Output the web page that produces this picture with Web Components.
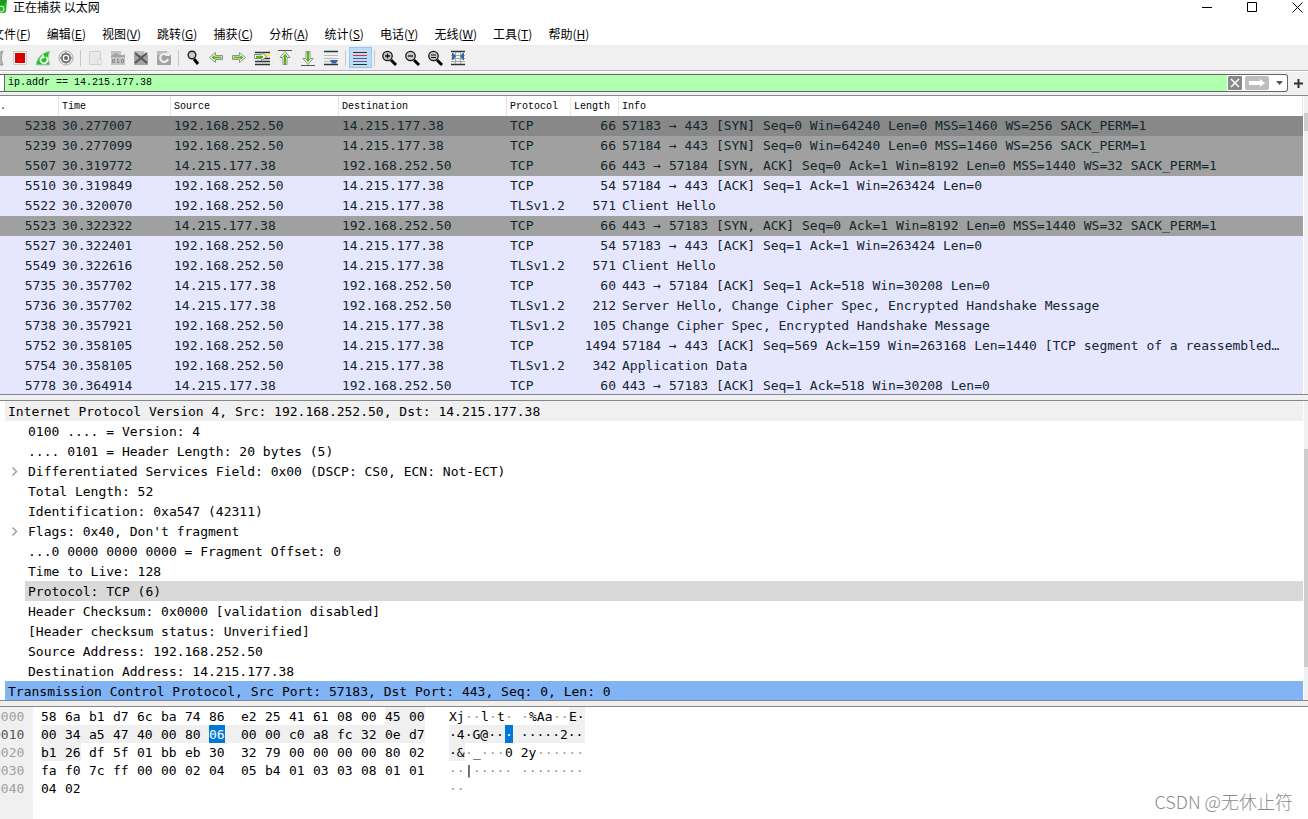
<!DOCTYPE html>
<html lang="zh-CN">
<head>
<meta charset="utf-8">
<title>正在捕获 以太网</title>
<style>
html, body { margin: 0; height: 100%; }
body {
  --mono: "DejaVu Sans Mono", "Liberation Mono", monospace;
  --small-mono: "Liberation Mono", "DejaVu Sans Mono", monospace;
  --ui: "Noto Sans CJK SC", "Noto Sans", sans-serif;
  --face: #f0f0f0;
  --edge: #828790;
  font: 12px/16px var(--ui);
  color: #000;
  background: #fff;
  overflow: hidden;
}
</style>
</head>
<body>
<ws-window></ws-window>

<script>
function define(name, html, setup) {
  const template = document.createElement('template');
  template.innerHTML = '<style>*{box-sizing:border-box}button{font:inherit;color:inherit;background:none;border:0;padding:0;margin:0}:host{display:block;box-sizing:border-box}</style>' + html;
  customElements.define(name, class extends HTMLElement {
    constructor() {
      super();
      this.attachShadow({ mode: 'open' }).append(template.content.cloneNode(true));
    }
    connectedCallback() {
      if (setup && !this.ready) { this.ready = true; setup(this, this.shadowRoot); }
    }
  });
}

/* Title bar */
define('ws-titlebar', `
<style>
:host { display: flex; height: 15px; }
.logo { width: 7px; height: 13px; }
h1 { flex: 1; margin: 0 0 0 6px; font-size: 12px; font-weight: 400; line-height: 14px; }
.controls { display: flex; margin-right: -12px; }
.controls button { width: 45px; height: 13px; }
.controls svg { display: block; margin: 1px auto 0; }
</style>
<svg class="logo" viewBox="0 0 7 13" aria-hidden="true"><path d="M0 0h7l-1 12q-3 2-6 1z" fill="#2eb52e"/><path d="M0 0h7l-3 5-4 1z" fill="#159a1c"/><circle cx="1" cy="9" r="3" fill="none" stroke="#d8f5d4"/></svg>
<h1>正在捕获 以太网</h1>
<div class="controls">
<button aria-label="最小化"><svg width="11" height="11" stroke="#000" fill="none"><path d="M0 5.500H10"/></svg></button>
<button aria-label="最大化"><svg width="11" height="11" stroke="#000" fill="none"><path d="M.5.500h9v9h-9z"/></svg></button>
<button aria-label="关闭"><svg width="11" height="11" stroke="#000" fill="none"><path d="M.5.500l10 10M10.500.500l-10 10"/></svg></button>
</div>`);

/* Menu bar */
define('ws-menubar', `
<style>
nav { display: flex; gap: 16px; height: 31px; margin-left: -8px; padding-top: 11px; border-bottom: 1px solid #ececec; white-space: nowrap; }
button { height: 16px; line-height: 16px; }
u { text-underline-offset: 1px; }
</style><nav></nav>`, (el, root) => {
  const items = [['文件','F'],['编辑','E'],['视图','V'],['跳转','G'],['捕获','C'],['分析','A'],['统计','S'],['电话','Y'],['无线','W'],['工具','T'],['帮助','H']];
  root.querySelector('nav').innerHTML = items.map(([t, k]) => `<button>${t}(<u>${k}</u>)</button>`).join('');
});

/* Tool button: the picture is passed in through the slot */
define('ws-tool', `
<style>
:host { width: 23px; height: 21px; flex: none; }
button { display: block; width: 23px; height: 21px; }
:host([active]) button { background: #c0dcf3; border: 1px solid #90c8f6; }
:host([active]) ::slotted(svg) { margin: -1px; }
::slotted(svg) { display: block; }
</style><button><slot></slot></button>`, (el, root) => {
  root.querySelector('button').setAttribute('aria-label', el.getAttribute('label'));
});

const arrowLeft = '<path d="M4.500 10.500l6-5v3h7v4h-7v3z" fill="#fff" stroke="#8a8f8a"/><path d="M6.500 10.500l3-2.500v1.500h7v2h-7V13z" fill="#55b50c"/>';
const paper = '<path d="M4 4h10l4 4v10H4z" fill="#a2a2a0"/><path d="M4 4h10l4 4H4z" fill="#bcbcba"/><path d="M14 4v4h4z" fill="#eee"/>';
const lens = '<path d="M13 13l5 5" stroke="#000" stroke-width="3"/><circle cx="9.500" cy="9" r="4.700" fill="#c9c9c9" stroke="#111" stroke-width="1.300"/>';
const fin = (c, d) => `<path d="M4 18c1-7 5-12 14-14-2 4-2 9 0 14z" fill="${c}" stroke="#c8c8c8"/><path d="M9 11a3.500 3.500 0 1 0 5-1" fill="none" stroke="#fff" stroke-width="1.800"/><path d="M11 7l-3 5 5-1z" fill="${d}"/>`;
const icons = [
  ['开始捕获', '<path d="M6 18c1-7 5-12 11-14-2 4-2 9 0 14z" fill="#b5b5b5" stroke="#999"/>'],
  ['停止捕获', '<path d="M4.500 4.500h13v13h-13z" fill="#eef3f3" stroke="#c8cccc"/><path d="M6 6h10v10H6z" fill="#dc0000"/>'],
  ['重新开始', fin('#21c522', '#fff')],
  ['捕获选项', '<circle cx="11" cy="11" r="7" fill="#eee" stroke="#aaa"/><circle cx="11" cy="11" r="4.200" fill="#fff" stroke="#777" stroke-width="2"/><circle cx="11" cy="11" r="2" fill="#666"/><path d="M11 5v2M11 15v2M5 11h2M15 11h2M7 7l1 1M14 14l1 1M15 7l-1 1M8 14l-1 1" stroke="#777"/>'],
  0,
  ['打开', '<path d="M5.500 4.500h11v13h-11z" fill="#e9e9e9" stroke="#cfcfcf"/><path d="M14 12h3v6h-3z" fill="#f5f5f5" stroke="#ccc"/>'],
  ['保存', '<path d="M4 4h10l4 4v10H4z" fill="#c4c4c2"/><path d="M4 9l5-3 3 2 6-1v3H4z" fill="#a2a2a0"/><path d="M14 4v4h4z" fill="#f4f4f4"/><path d="M5.500 12.500h2v3h-2zM14.500 12.500h2v3h-2zM11 12v4M10 12.500h1M10 15.500h2.500" fill="none" stroke="#888"/>'],
  ['关闭文件', paper + '<path d="M5 6l12 10M17 6L5 16" stroke="#555" stroke-width="2"/>'],
  ['重新加载', paper + '<path d="M14 8a4 4 0 1 0 1 4" fill="none" stroke="#eee" stroke-width="2.200"/><path d="M12 9h5V5z" fill="#eee"/>'],
  0,
  ['查找', '<path d="M12 12l4 5" stroke="#000" stroke-width="3"/><circle cx="10" cy="8" r="3.800" fill="#c9c9c9" stroke="#222" stroke-width="1.400"/>'],
  ['后退', arrowLeft],
  ['前进', '<g transform="matrix(-1 0 0 1 22 0)">' + arrowLeft + '</g>'],
  ['转到分组', '<path d="M4 5.500h15M4 14.500h15M12 11.500h7M4 17.500h15" stroke="#2e3436" stroke-width="1.500"/><path d="M14 6.500h5v3h-5z" fill="#fce94f"/><path d="M3.500 7.500h7v-2l5 4-5 4v-2h-7z" fill="#fff" stroke="#8a8f8a"/><path d="M5 8.700h7V11H5z" fill="#55b50c"/>'],
  ['第一个', '<path d="M4 3.500h14" stroke="#555"/><path d="M11 4.500l5 6h-3v7H9v-7H6z" fill="#fff" stroke="#8a8f8a"/><path d="M11 6.500l2.500 3.500H12v7h-2v-7H8.500z" fill="#55b50c"/>'],
  ['最后一个', '<path d="M4 18.500h14" stroke="#555"/><path d="M11 17.500l5-6h-3v-7H9v7H6z" fill="#fff" stroke="#8a8f8a"/><path d="M11 15.500l2.500-3.500H12V5h-2v7H8.500z" fill="#55b50c"/>'],
  ['自动滚动', '<path d="M4 4.500h14M4 17.500h14" stroke="#2e3436" stroke-width="1.300"/><path d="M4 8.500h14M4 11.500h14M4 14.500h7" stroke="#babdb6"/><path d="M10 13h8l-2 3.500h-4z" fill="#3465a4"/>'],
  0,
  ['着色', '<path d="M4 5.500h14M4 17.500h14" stroke="#2e3436"/><path d="M4 8.500h14" stroke="#ef2929"/><path d="M4 11.500h14" stroke="#3465a4"/><path d="M4 14.500h14" stroke="#75507b"/>', 1],
  0,
  ['放大', lens + '<path d="M7 9h5M9.500 6.500v5" stroke="#111" stroke-width="1.300"/>'],
  ['缩小', lens + '<path d="M7 9h5" stroke="#111" stroke-width="1.300"/>'],
  ['普通大小', lens + '<path d="M7 8h5M7 10.500h5" stroke="#111"/>'],
  ['调整列宽', '<path d="M4 4.500h14M4 17.500h14" stroke="#2e3436" stroke-width="1.300"/><path d="M4 8.500h14M4 11.500h14M4 14.500h14M8.500 5v12M13.500 5v12" stroke="#a5a8a2"/><path d="M5 6h1l3 3-3 4H5zM17 6h-1l-3 3 3 4h1z" fill="#3465a4"/>']
];
define('ws-toolbar', `
<style>
:host { display: flex; height: 25px; margin: 0; padding: 1px 0 0; background: var(--face); border-bottom: 1px solid #b4b4b4; }
.row { display: flex; margin-left: -14px; }
i { width: 6px; height: 16px; margin-top: 3px; padding-left: 2px; }
i::before { content: ""; display: block; width: 1px; height: 16px; background: #c8c8c8; }
</style><div class="row" role="toolbar"></div>`, (el, root) => {
  root.querySelector('.row').innerHTML = icons.map(x => x
    ? `<ws-tool label="${x[0]}"${x[2] ? ' active' : ''}><svg width="23" height="21" viewBox="0 0 23 21" fill="none">${x[1]}</svg></ws-tool>`
    : '<i></i>').join('');
});

/* Display filter */
define('ws-filterbar', `
<style>
:host { display: flex; height: 25px; padding-top: 2px; background: var(--face); border-top: 1px solid #fff; border-bottom: 1px solid var(--edge); }
.box { flex: 1; display: flex; align-items: center; height: 18px; background: #fff; border: 1px solid #666; border-left: 0; border-radius: 0 3px 3px 0; padding-left: 4px; }
input { flex: 1; min-width: 0; height: 16px; border: 0; border-left: 1px solid #666; border-radius: 0; padding: 0 0 0 3px; background: #afffaf; color: #000; font: 10px/16px var(--small-mono); outline: 0; }
button { height: 14px; }
button svg { display: block; }
.clear { margin-left: 1px; width: 14px; }
.apply { margin: 0 3px; width: 24px; }
.more { width: 14px; margin-right: 1px; }
.add { width: 20px; height: 18px; }
.add svg { margin: 0 auto; }
</style>
<div class="box">
<input type="text" aria-label="显示过滤器" value="ip.addr == 14.215.177.38" spellcheck="false">
<button class="clear" aria-label="清除"><svg width="14" height="14"><rect width="14" height="14" rx="1" fill="#888a85"/><path d="M3 3l8 8M11 3l-8 8" stroke="#fff" stroke-width="1.500"/></svg></button>
<button class="apply" aria-label="应用"><svg width="24" height="14"><rect width="24" height="14" rx="2" fill="#bdbdbd"/><path d="M4 5h11V3l5 4-5 4V9H4z" fill="#fff"/></svg></button>
<button class="more" aria-label="历史"><svg width="14" height="14"><path d="M4 5h7l-3.500 4z" fill="#555"/></svg></button>
</div>
<button class="add" aria-label="添加"><svg width="9" height="9"><path d="M4.500 0v9M0 4.500h9" stroke="#333" stroke-width="2"/></svg></button>`);

/* Scroll bar: lead, thumb and rest share the height */
define('ws-scrollbar', `
<style>
:host { display: flex; flex-direction: column; width: 4px; flex: none; background: var(--face); }
.thumb { background: #cdcdcd; }
</style><div class="lead"></div><div class="thumb"></div><div class="rest"></div>`, (el, root) => {
  const parts = el.getAttribute('parts').split(' ');
  [...root.querySelectorAll('div')].forEach((d, i) => d.style.flex = parts[i] + ' 1 0');
});

/* Packet list */
const A = '192.168.252.50', B = '14.215.177.38';
const packets = [
  [5238,'30.277007',A,B,'TCP',66,'57183 → 443 [SYN] Seq=0 Win=64240 Len=0 MSS=1460 WS=256 SACK_PERM=1','cur'],
  [5239,'30.277099',A,B,'TCP',66,'57184 → 443 [SYN] Seq=0 Win=64240 Len=0 MSS=1460 WS=256 SACK_PERM=1','syn'],
  [5507,'30.319772',B,A,'TCP',66,'443 → 57184 [SYN, ACK] Seq=0 Ack=1 Win=8192 Len=0 MSS=1440 WS=32 SACK_PERM=1','syn'],
  [5510,'30.319849',A,B,'TCP',54,'57184 → 443 [ACK] Seq=1 Ack=1 Win=263424 Len=0'],
  [5522,'30.320070',A,B,'TLSv1.2',571,'Client Hello'],
  [5523,'30.322322',B,A,'TCP',66,'443 → 57183 [SYN, ACK] Seq=0 Ack=1 Win=8192 Len=0 MSS=1440 WS=32 SACK_PERM=1','syn'],
  [5527,'30.322401',A,B,'TCP',54,'57183 → 443 [ACK] Seq=1 Ack=1 Win=263424 Len=0'],
  [5549,'30.322616',A,B,'TLSv1.2',571,'Client Hello'],
  [5735,'30.357702',B,A,'TCP',60,'443 → 57184 [ACK] Seq=1 Ack=518 Win=30208 Len=0'],
  [5736,'30.357702',B,A,'TLSv1.2',212,'Server Hello, Change Cipher Spec, Encrypted Handshake Message'],
  [5738,'30.357921',A,B,'TLSv1.2',105,'Change Cipher Spec, Encrypted Handshake Message'],
  [5752,'30.358105',A,B,'TCP',1494,'57184 → 443 [ACK] Seq=569 Ack=159 Win=263168 Len=1440 [TCP segment of a reassembled…'],
  [5754,'30.358105',A,B,'TLSv1.2',342,'Application Data'],
  [5778,'30.364914',B,A,'TCP',60,'443 → 57183 [ACK] Seq=1 Ack=518 Win=30208 Len=0']
];
define('ws-packet-list', `
<style>
:host { display: flex; overflow: hidden; }
.view { flex: 1; min-width: 0; overflow: hidden; margin-right: 1px; }
table { width: 100%; table-layout: fixed; border-collapse: separate; border-spacing: 0; font: 13px/20px var(--mono); color: #12272e; }
th { height: 20px; padding: 2px 3px 0; text-align: left; font: 10px/18px var(--small-mono); color: #000; border-right: 1px solid #e5e5e5; white-space: nowrap; }
th:first-child { padding-left: 0; }
td { height: 20px; padding: 0 3px; white-space: pre; overflow: hidden; background: #e7e6ff; }
.n { text-align: right; }
.syn td { background: #a0a0a0; }
.cur td { background: #888; }
</style>
<div class="view"><table>
<colgroup><col style="width:59px"><col style="width:112px"><col style="width:168px"><col style="width:168px"><col style="width:64px"><col style="width:48px"><col></colgroup>
<thead><tr><th>.</th><th>Time</th><th>Source</th><th>Destination</th><th>Protocol</th><th>Length</th><th>Info</th></tr></thead>
<tbody></tbody></table></div>
<ws-scrollbar parts="17 18 263"></ws-scrollbar>`, (el, root) => {
  root.querySelector('tbody').innerHTML = packets.map(p =>
    `<tr class="${p[7] || ''}">${p.slice(0, 7).map((v, i) => `<td${i === 0 || i === 5 ? ' class="n"' : ''}>${v}</td>`).join('')}</tr>`).join('');
});

/* Protocol tree */
define('ws-details', `
<style>
:host { display: flex; overflow: hidden; font: 13px/18px var(--mono); }
ul { list-style: none; margin: 0; padding: 0; }
.tree { flex: 1; min-width: 0; overflow: hidden; padding-left: 5px; margin-right: 1px; white-space: pre; }
.top > span { display: block; padding: 2px 0 0 3px; }
.head { background: var(--face); }
.tcp { background: #80b4f5; }
.tree ul li { display: flex; }
.tree ul svg { width: 20px; height: 20px; flex: none; }
.tree ul span { flex: 1; padding: 2px 0 0 3px; }
.sel { background: #d9d9d9; }
</style>
<ul class="tree"></ul>
<ws-scrollbar parts="48 218 33"></ws-scrollbar>`, (el, root) => {
  const rows = ['0100 .... = Version: 4', '.... 0101 = Header Length: 20 bytes (5)', '>Differentiated Services Field: 0x00 (DSCP: CS0, ECN: Not-ECT)', 'Total Length: 52', 'Identification: 0xa547 (42311)', ">Flags: 0x40, Don't fragment", '...0 0000 0000 0000 = Fragment Offset: 0', 'Time to Live: 128', 'Protocol: TCP (6)', 'Header Checksum: 0x0000 [validation disabled]', '[Header checksum status: Unverified]', 'Source Address: 192.168.252.50', 'Destination Address: 14.215.177.38'];
  root.querySelector('.tree').innerHTML =
    '<li class="top"><span class="head">Internet Protocol Version 4, Src: 192.168.252.50, Dst: 14.215.177.38</span><ul>' +
    rows.map(r => {
      const open = r[0] === '>';
      return `<li><svg viewBox="0 0 20 20">${open ? '<path d="M7.500 6.500l4 4-4 4" fill="none" stroke="#a0a0a0" stroke-width="1.500"/>' : ''}</svg><span${r.startsWith('Protocol') ? ' class="sel"' : ''}>${open ? r.slice(1) : r}</span></li>`;
    }).join('') +
    '</ul></li><li class="top"><span class="tcp">Transmission Control Protocol, Src Port: 57183, Dst Port: 443, Seq: 0, Len: 0</span></li>';
});

/* Byte view */
define('ws-bytes', `
<style>
:host { overflow: hidden; font: 13px/16px var(--mono); background: linear-gradient(to right, var(--face) 33px, #fff 33px); }
table { border-collapse: separate; border-spacing: 0; table-layout: fixed; width: 592px; margin-left: -7px; }
td, th { padding: 0; height: 18px; font-weight: 400; text-align: left; white-space: pre; }
th { color: #a0a0a0; width: 48px; padding-top: 2px; }
th.on { color: #555; }
td { width: 24px; }
td.mid { width: 32px; }
td.last { width: 40px; }
td.asc { width: 136px; }
td span, td b { display: block; width: 16px; height: 18px; padding-top: 2px; font-weight: 400; }
.field { background: var(--face); }
td.stop { background: none; }
td.stop span { background: var(--face); }
td b { background: #0078d7; color: #fff; }
.asc i { display: inline-block; font-style: normal; vertical-align: top; height: 18px; padding-top: 2px; }
.asc i.dot { color: #999; }
.asc i.pick { background: #0078d7; color: #fff; }
</style><table><tbody></tbody></table>`, (el, root) => {
  const bytes = '58 6a b1 d7 6c ba 74 86 e2 25 41 61 08 00 45 00 00 34 a5 47 40 00 80 06 00 00 c0 a8 fc 32 0e d7 b1 26 df 5f 01 bb eb 30 32 79 00 00 00 00 80 02 fa f0 7c ff 00 00 02 04 05 b4 01 03 03 08 01 01 04 02'.split(' ');
  const from = 14, to = 33, pick = 23;
  let html = '';
  for (let r = 0; r * 16 < bytes.length; r++) {
    const line = bytes.slice(r * 16, r * 16 + 16);
    const runs = [];
    const add = (cls, ch) => {
      const last = runs[runs.length - 1];
      if (last && last.cls === cls) last.text += ch; else runs.push({ cls, text: ch });
    };
    html += `<tr><th scope="row"${r === 1 ? ' class="on"' : ''}>${'00' + r + '0'}</th>`;
    for (let c = 0; c < 16; c++) {
      const i = r * 16 + c, cls = [];
      if (c === 7) cls.push('mid');
      if (c === 15) cls.push('last');
      const inField = i >= from && i <= to;
      if (inField) cls.push('field');
      if (inField && (c === 15 || i === to)) cls.push('stop');
      const v = line[c] || '';
      const tag = i === pick ? 'b' : 'span';
      html += `<td class="${cls.join(' ')}"><${tag}>${v}</${tag}></td>`;
      if (!v) continue;
      const n = parseInt(v, 16), printable = n > 32 && n < 127;
      if (c === 8) add(inField ? 'field' : 'plain', ' ');
      add(i === pick ? 'pick' : inField ? 'field' : printable ? 'plain' : 'dot',
        printable ? String.fromCharCode(n) : '·');
    }
    html += `<td class="asc">${runs.map(x => `<i class="${x.cls}" style="width:${x.text.length * 8}px">${x.text.replace('&', '&amp;')}</i>`).join('')}</td></tr>`;
  }
  root.querySelector('tbody').innerHTML = html;
});

/* Whole window */
define('ws-window', `
<style>
:host { position: relative; display: flex; flex-direction: column; height: 100vh; overflow: hidden; }
ws-titlebar, ws-menubar, ws-toolbar, ws-filterbar { flex: none; }
ws-packet-list { flex: 298 1 0; }
ws-details { flex: 299 1 0; }
ws-bytes { flex: 112 1 0; }
.split { flex: none; height: 7px; background: var(--face); border: solid var(--edge); border-width: 1px 0; }
.mark { position: absolute; right: 15px; bottom: 6px; font: 300 18px/24px "Noto Sans CJK SC", sans-serif; color: #8c8c8c; }
</style>
<ws-titlebar></ws-titlebar>
<ws-menubar></ws-menubar>
<ws-toolbar></ws-toolbar>
<ws-filterbar></ws-filterbar>
<ws-packet-list></ws-packet-list>
<div class="split"></div>
<ws-details></ws-details>
<div class="split"></div>
<ws-bytes></ws-bytes>
<div class="mark">CSDN @无休止符</div>`);
</script>
</body>
</html>
